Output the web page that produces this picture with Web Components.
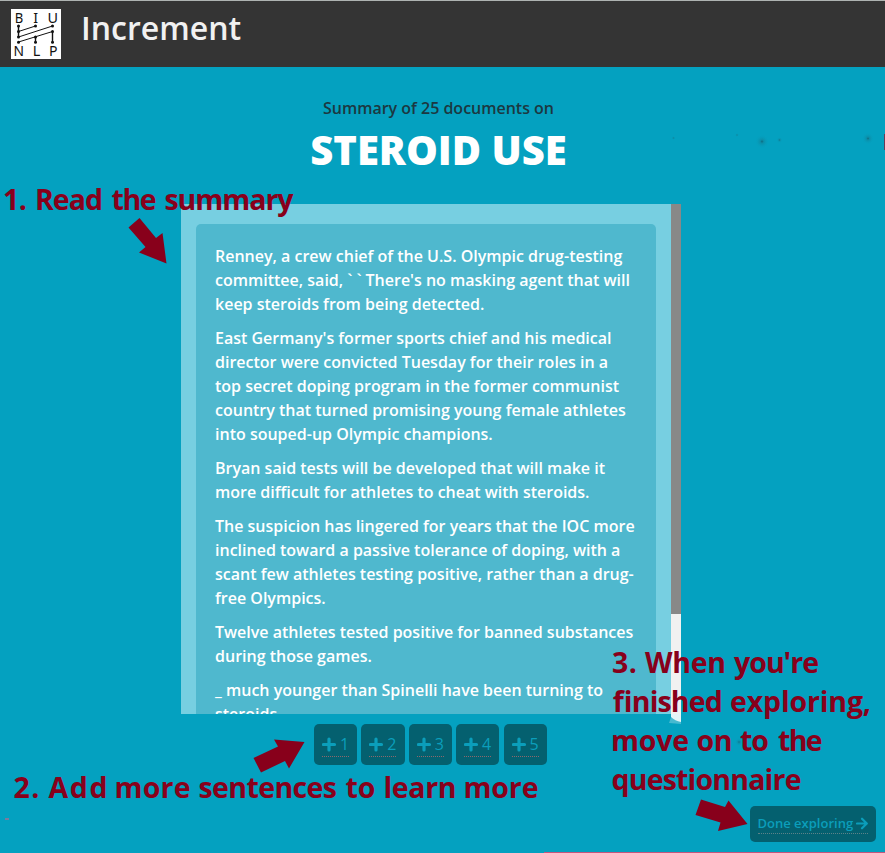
<!DOCTYPE html>
<html lang="en">
<head>
<meta charset="utf-8">
<title>Increment</title>
<style>
html,body{margin:0;height:100%;overflow:hidden;background:#04a1c0;font-family:"Open Sans","Noto Sans",sans-serif}
</style>
</head>
<body>
<increment-app></increment-app>
<script>
const define = (name, html) => {
  const t = document.createElement('template');
  t.innerHTML = html;
  customElements.define(name, class extends HTMLElement {
    constructor() {
      super();
      this.attachShadow({mode: 'open'}).append(t.content.cloneNode(true));
    }
  });
};

define('biu-logo', `<style>:host{display:block;width:50px;height:50px;background:#fff}svg{display:block}</style>
<svg width="50" height="50" viewBox="0 0 50 50">
<g font-family="Noto Sans" font-size="14.4" fill="#111" text-anchor="middle">
<text x="8" y="14" textLength="8.500" lengthAdjust="spacingAndGlyphs">B</text><text x="24.7" y="14">I</text><text x="41.7" y="14">U</text>
<text x="7.7" y="47.200" textLength="10.500" lengthAdjust="spacingAndGlyphs">N</text><text x="25.500" y="47.200">L</text><text x="42.300" y="47.200" textLength="8.500" lengthAdjust="spacingAndGlyphs">P</text></g>
<g stroke="#111" fill="none"><path d="M7.5 17V28M24.5 28V33M41.5 23V33" stroke-width="1.4"/><path d="M7.5 22.5L24.5 17M7.5 28L41.5 17M7.5 33L41.5 22.5" stroke-width="1"/></g>
<g fill="#111"><circle cx="7.5" cy="17" r="1.5"/><circle cx="24.5" cy="17" r="1.5"/><circle cx="41.5" cy="17" r="1.5"/><circle cx="7.5" cy="22.5" r="1.5"/><circle cx="7.5" cy="28" r="1.5"/><circle cx="24.5" cy="28" r="1.5"/><circle cx="41.5" cy="22.5" r="1.5"/><circle cx="7.5" cy="33.3" r="1.5"/><circle cx="24.5" cy="33.3" r="1.5"/><circle cx="41.5" cy="33.3" r="1.5"/></g>
</svg>`);

define('app-header', `<style>:host{display:flex;box-sizing:border-box;height:67px;background:#343434;border-top:1px solid #aeb3b1;padding:8px 11px;gap:20px}
h1{margin:0;font-size:32px;line-height:38px;font-weight:600;color:#f1f1f1}</style>
<biu-logo></biu-logo><h1><slot></slot></h1>`);

define('topic-title', `<style>:host{display:block;width:877px;text-align:center;padding-top:29px;height:108px}
p{margin:0;font-size:16px;line-height:24px;color:#1c3841;font-weight:600;letter-spacing:-.01px}
h2{margin:0;font-size:40px;line-height:60px;font-weight:800;color:#fff}</style>
<p><slot name="lead"></slot></p><h2><slot></slot></h2>`);

define('summary-pane', `<style>:host{display:flex;width:500px;height:510px;margin-left:181px;overflow:hidden}
.view{box-sizing:border-box;width:490px;background:#77cfe1;padding:20px 15px 0;overflow:hidden}
.card{box-sizing:border-box;height:560px;background:#4fb8ce;border-radius:5px;padding:20px 19px;color:#fff;font-size:16px;font-weight:600;line-height:24px;white-space:nowrap}
.bar{width:10px;background:#f1f1f1}.thumb{height:410px;background:#888}
::slotted(p){margin:0 0 10px}</style>
<div class="view"><div class="card"><slot></slot></div></div><div class="bar"><div class="thumb"></div></div>`);

define('add-button', `<style>:host{display:flex;box-sizing:border-box;width:43.2px;height:41px;border-radius:5px;background:#04606f;justify-content:center;padding-top:8px;color:#0b9ebb}
.in{display:flex;box-sizing:border-box;width:27px;height:25px;border-bottom:1px dotted #8b686b;justify-content:space-between;font-size:16px;font-weight:500;line-height:24px}
svg{display:block;margin-top:5px}</style>
<span class="in"><svg width="15" height="15" viewBox="0 0 15 15"><path d="M7 2V13M1.500 7.5H12.500" stroke="currentColor" stroke-width="3.2" stroke-linecap="round"/></svg><span><slot></slot></span></span>`);

define('add-bar', `<style>:host{display:flex;gap:4.2px;padding:10px 0 0 314px}</style><slot></slot>`);

define('done-button', `<style>:host{display:flex;box-sizing:border-box;width:126px;height:36px;border-radius:5px;background:#04606f;padding:8px;color:#0b9ebb}
.in{display:flex;box-sizing:border-box;width:110px;height:20px;border-bottom:1px dotted #5c8288;justify-content:space-between;font-size:13px;font-weight:600;line-height:19px;white-space:nowrap}
svg{display:block;margin-top:3px}.in span{margin-left:-.5px}</style>
<span class="in"><span><slot></slot></span><svg width="12" height="13" viewBox="0 0 12 13"><path d="M1 6.5H10.5M6 1.7L10.8 6.5L6 11.3" fill="none" stroke="currentColor" stroke-width="2.2" stroke-linecap="round" stroke-linejoin="round"/></svg></span>`);

define('tutorial-notes', `<style>:host{position:absolute;inset:0;display:block;pointer-events:none}
svg{display:block}text{font-family:"Open Sans","Noto Sans",sans-serif;font-weight:700;font-size:28.5px;fill:#88001b}</style>
<svg width="885" height="853" viewBox="0 0 885 853">
<defs><radialGradient id="s"><stop offset="0" stop-color="#16404d" stop-opacity=".6"/><stop offset=".25" stop-color="#176d80" stop-opacity=".35"/><stop offset="1" stop-color="#04a1c0" stop-opacity="0"/></radialGradient></defs>
<path d="M669 723L671 717L681 721V724Z" fill="#75cadb" opacity=".6"/><path d="M671 714H681V722Q675 721 671 717Z" fill="#e4f4f8"/>
<g fill="url(#s)"><circle cx="762" cy="141.500" r="7"/><circle cx="779.500" cy="140" r="3"/><circle cx="868" cy="138.500" r="6"/><circle cx="673.500" cy="138" r="2"/><circle cx="737" cy="135" r="2"/><circle cx="739" cy="742" r="4"/></g>
<path d="M884 134h1v16h-1z" fill="#693a57"/><path d="M5 818h4v2h-4z" fill="#7b7b9d"/><path d="M544 852h341v1H544z" fill="#c4567d"/>
<path fill="#88001b" d="M128.500 227.500L139.500 218L156 238L162.500 233L166.500 263.500L139 252.500L145.500 247Z"/>
<path fill="#88001b" d="M253.500 758L278 746.500L274 739.500L304.500 742L289 768.500L285 761L261 772.500Z"/>
<path fill="#88001b" d="M701 799.500L725 807L728.500 800.500L747.500 824L718 831L720.500 822.500L695.500 815Z"/>
<text y="210"><tspan x="3" textLength="24">1.</tspan> <tspan x="35" textLength="68">Read</tspan> <tspan x="111.500" textLength="45">the</tspan> <tspan x="164.500" textLength="129">summary</tspan></text>
<text y="797.500"><tspan x="13.500" textLength="26">2.</tspan> <tspan x="48.500" textLength="59">Add</tspan> <tspan x="114.500" textLength="76">more</tspan> <tspan x="198.500" textLength="138.500">sentences</tspan> <tspan x="345.500" textLength="30">to</tspan> <tspan x="383.500" textLength="73">learn</tspan> <tspan x="463.500" textLength="75">more</tspan></text>
<text y="672.500"><tspan x="612" textLength="25">3.</tspan> <tspan x="645" textLength="81">When</tspan> <tspan x="734" textLength="85">you're</tspan></text>
<text y="711.500"><tspan x="612" textLength="110">finished</tspan> <tspan x="730" textLength="141">exploring,</tspan></text>
<text y="750.500"><tspan x="611" textLength="78">move</tspan> <tspan x="696.500" textLength="36">on</tspan> <tspan x="740" textLength="29">to</tspan> <tspan x="778" textLength="44.500">the</tspan></text>
<text y="789.500"><tspan x="611.500" textLength="190">questionnaire</tspan></text>
</svg>`);

define('increment-app', `<style>:host{display:block;position:relative;width:885px;height:853px;overflow:hidden;background:#04a1c0}
.foot{display:flex;justify-content:flex-end;padding:41px 9px 0 0}.tick{letter-spacing:4px}</style>
<app-header>Increment</app-header>
<topic-title><span slot="lead">Summary of 25 documents on</span>STEROID USE</topic-title>
<summary-pane>
<p>Renney, a crew chief of the U.S. Olympic drug-testing<br>committee, said, <span class="tick">\`\`</span>There's no masking agent that will<br>keep steroids from being detected.</p>
<p>East Germany's former sports chief and his medical<br>director were convicted Tuesday for their roles in a<br>top secret doping program in the former communist<br>country that turned promising young female athletes<br>into souped-up Olympic champions.</p>
<p>Bryan said tests will be developed that will make it<br>more difficult for athletes to cheat with steroids.</p>
<p>The suspicion has lingered for years that the IOC more<br>inclined toward a passive tolerance of doping, with a<br>scant few athletes testing positive, rather than a drug-<br>free Olympics.</p>
<p>Twelve athletes tested positive for banned substances<br>during those games.</p>
<p>_ much younger than Spinelli have been turning to<br>steroids.</p>
</summary-pane>
<add-bar><add-button>1</add-button><add-button>2</add-button><add-button>3</add-button><add-button>4</add-button><add-button>5</add-button></add-bar>
<div class="foot"><done-button>Done exploring</done-button></div>
<tutorial-notes></tutorial-notes>`);
</script>
</body>
</html>
